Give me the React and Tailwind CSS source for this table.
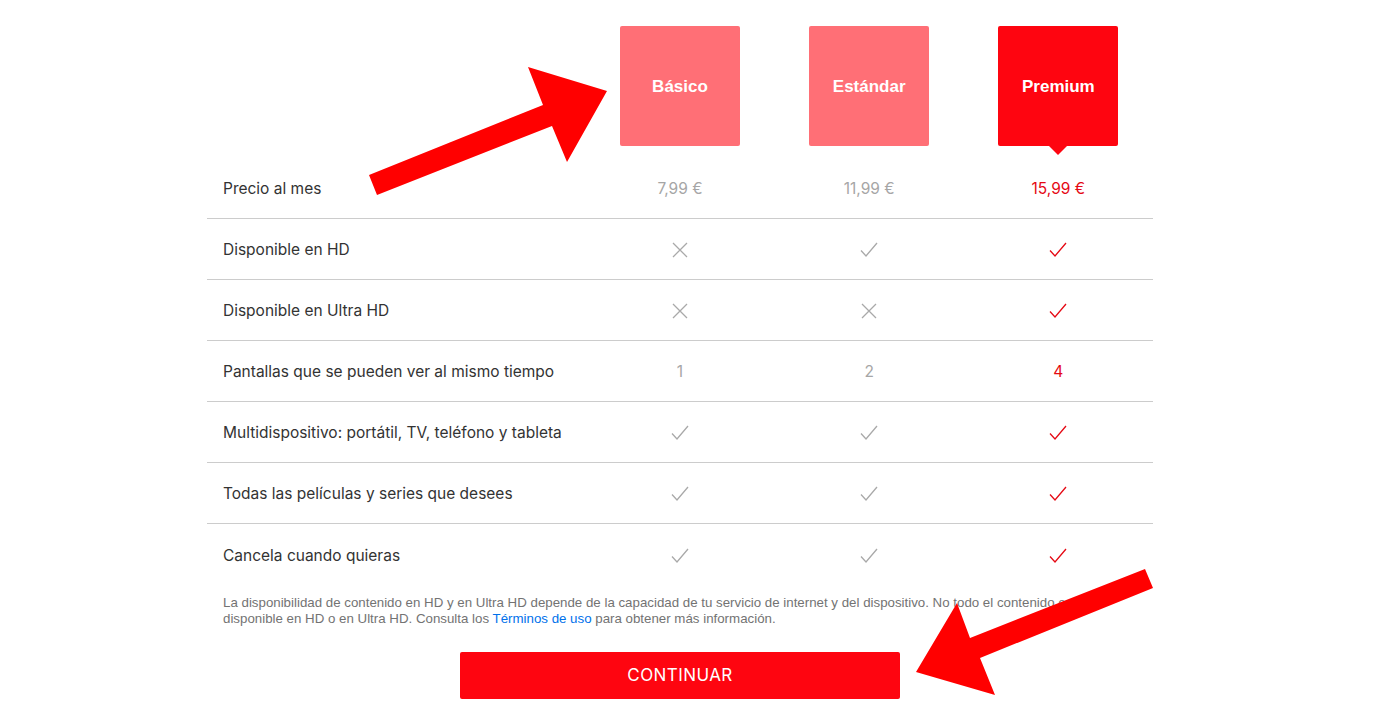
import React from "react";

const Check = ({ red }) => (
  <svg width="20" height="18" viewBox="0 0 20 18" className="inline-block">
    <path d="M2 9.5 L7 15 L18 2" fill="none" stroke={red ? "#e50914" : "#a9a9a9"} strokeWidth="1.3" />
  </svg>
);

const Cross = () => (
  <svg width="18" height="18" viewBox="0 0 18 18" className="inline-block">
    <path d="M2 2 L16 16 M16 2 L2 16" fill="none" stroke="#a9a9a9" strokeWidth="1.3" />
  </svg>
);

const rows = [
  { label: "Disponible en HD", v: ["x", "c", "c"] },
  { label: "Disponible en Ultra HD", v: ["x", "x", "c"] },
  { label: "Pantallas que se pueden ver al mismo tiempo", v: ["1", "2", "4"] },
  { label: "Multidispositivo: portátil, TV, teléfono y tableta", v: ["c", "c", "c"] },
  { label: "Todas las películas y series que desees", v: ["c", "c", "c"] },
  { label: "Cancela cuando quieras", v: ["c", "c", "c"] },
];

function Cell({ v, red }) {
  if (v === "x") return <Cross />;
  if (v === "c") return <Check red={red} />;
  return <span className={red ? "text-[#e50914]" : "text-[#a6a6a6]"}>{v}</span>;
}

export default function App() {
  return (
    <div className="relative w-[1377px] h-[723px] bg-white overflow-hidden" style={{ fontFamily: "Inter, 'Noto Sans', sans-serif" }}>
      <div className="ml-[207px] w-[946px] pt-[26px]">
        {/* header */}
        <div className="grid grid-cols-[40%_20%_20%_20%]">
          <div />
          {[
            ["Básico", "bg-[#ff6f76]", false],
            ["Estándar", "bg-[#ff6f76]", false],
            ["Premium", "bg-[#fe0510]", true],
          ].map(([n, bg, sel]) => (
            <div key={n} className="flex justify-center">
              <div className={`relative w-[120px] h-[120px] rounded-[2px] ${bg} flex items-center justify-center pt-[2px] text-white font-bold text-[17px]`} style={{ fontFamily: "'Liberation Sans', Arial, sans-serif" }}>
                {n}
                {sel && (
                  <div className="absolute left-1/2 -translate-x-1/2 top-full w-0 h-0 border-l-[9px] border-r-[9px] border-t-[9px] border-l-transparent border-r-transparent border-t-[#fe0510]" />
                )}
              </div>
            </div>
          ))}
        </div>
        {/* price row */}
        <div className="mt-[12px] grid grid-cols-[40%_20%_20%_20%] h-[61px] items-center border-b border-[#cccccc] text-[15.5px] pt-[2px]">
          <div className="pl-4 text-[#333333]">Precio al mes</div>
          <div className="text-center text-[#a6a6a6]">7,99 €</div>
          <div className="text-center text-[#a6a6a6]">11,99 €</div>
          <div className="text-center text-[#e50914]">15,99 €</div>
        </div>
        {rows.map((r, i) => (
          <div
            key={r.label}
            className={`grid grid-cols-[40%_20%_20%_20%] h-[61px] items-center text-[15.5px] pt-[2px] ${i < rows.length - 1 ? "border-b border-[#cccccc]" : ""}`}
          >
            <div className="pl-4 text-[#333333]">{r.label}</div>
            {r.v.map((v, j) => (
              <div key={j} className="flex justify-center items-center text-[15.5px]">
                <Cell v={v} red={j === 2} />
              </div>
            ))}
          </div>
        ))}
        <p className="mt-[10px] pl-4 pr-2 text-[13.3px] leading-[16px] text-[#737373]" style={{ fontFamily: "'Liberation Sans', Arial, sans-serif" }}>
          La disponibilidad de contenido en HD y en Ultra HD depende de la capacidad de tu servicio de internet y del dispositivo. No todo el contenido está
          <br />
          disponible en HD o en Ultra HD. Consulta los <span className="text-[#0071eb]">Términos de uso</span> para obtener más información.
        </p>
        <div className="mt-[25px] flex justify-center">
          <button className="w-[440px] h-[47px] rounded-[2px] bg-[#fe0510] text-white text-[17px] tracking-wide pt-[1px]">CONTINUAR</button>
        </div>
      </div>
      <svg className="absolute inset-0 pointer-events-none" width="1377" height="723">
        <polygon points="369,175 543,105 528,67 607,91 567,162 552,126 377,195" fill="#ff0000" />
        <polygon points="1145,569 970,638 957,603 916,672 995,695 980,658 1153,588" fill="#ff0000" />
      </svg>
    </div>
  );
}
